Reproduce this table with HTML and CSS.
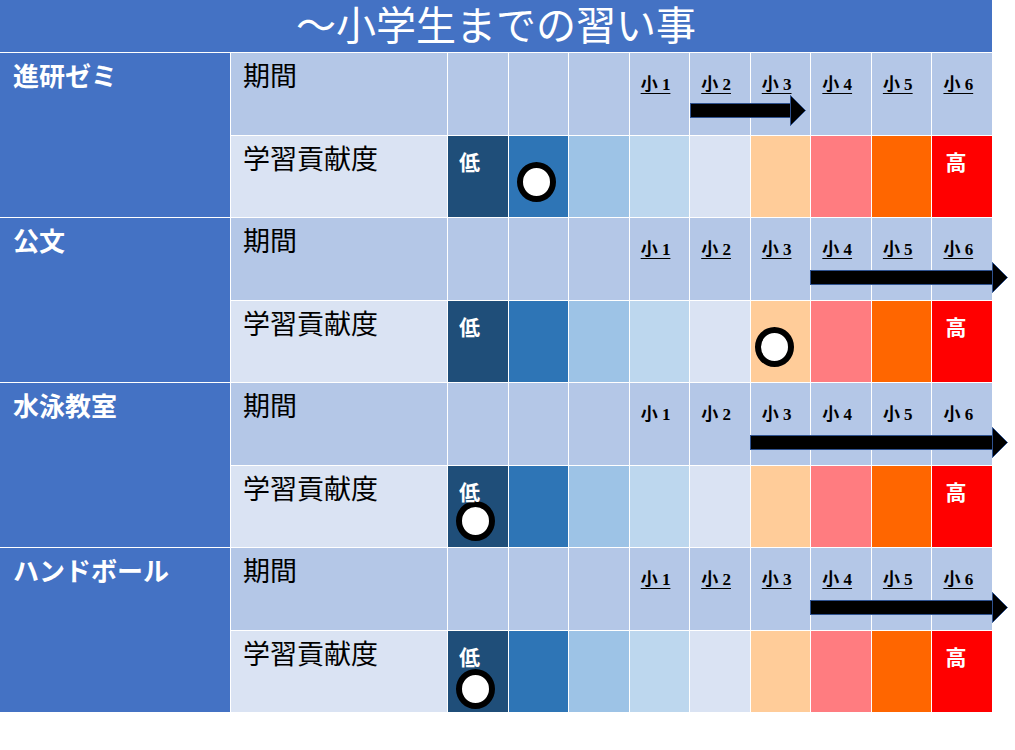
FILE: index.html
```html
<!DOCTYPE html>
<html lang="ja">
<head>
<meta charset="utf-8">
<title>～小学生までの習い事</title>
<link rel="stylesheet" href="styles.css">
</head>
<body>
<div class="sheet">
  <div class="title"><span class="title-text">～小学生までの習い事</span></div>

  <!-- 進研ゼミ -->
  <div class="name">進研ゼミ</div>
  <div class="label period">期間</div>
  <div class="cell p"></div>
  <div class="cell p"></div>
  <div class="cell p"></div>
  <div class="cell p"><span class="grade u">小 1</span></div>
  <div class="cell p"><span class="grade u">小 2</span>
    <div class="arrow arrow-a"><span class="shaft"></span><svg class="head" width="16" height="31" viewBox="0 0 16 31"><polygon points="0.5,0.5 15.5,15.5 0.5,30.5" fill="#000" stroke="#2F528F" stroke-width="1"/></svg></div>
  </div>
  <div class="cell p"><span class="grade u">小 3</span></div>
  <div class="cell p"><span class="grade u">小 4</span></div>
  <div class="cell p"><span class="grade u">小 5</span></div>
  <div class="cell p"><span class="grade u">小 6</span></div>
  <div class="label contrib">学習貢献度</div>
  <div class="cell c1 low"><span class="lv">低</span></div>
  <div class="cell c2 marked"><span class="mark"></span></div>
  <div class="cell c3"></div>
  <div class="cell c4"></div>
  <div class="cell c5"></div>
  <div class="cell c6"></div>
  <div class="cell c7"></div>
  <div class="cell c8"></div>
  <div class="cell c9 high"><span class="lv">高</span></div>

  <!-- 公文 -->
  <div class="name">公文</div>
  <div class="label period">期間</div>
  <div class="cell p"></div>
  <div class="cell p"></div>
  <div class="cell p"></div>
  <div class="cell p"><span class="grade u">小 1</span></div>
  <div class="cell p"><span class="grade u">小 2</span></div>
  <div class="cell p"><span class="grade u">小 3</span></div>
  <div class="cell p"><span class="grade u">小 4</span>
    <div class="arrow arrow-b"><span class="shaft"></span><svg class="head" width="16" height="31" viewBox="0 0 16 31"><polygon points="0.5,0.5 15.5,15.5 0.5,30.5" fill="#000" stroke="#2F528F" stroke-width="1"/></svg></div>
  </div>
  <div class="cell p"><span class="grade u">小 5</span></div>
  <div class="cell p"><span class="grade u">小 6</span></div>
  <div class="label contrib">学習貢献度</div>
  <div class="cell c1 low"><span class="lv">低</span></div>
  <div class="cell c2"></div>
  <div class="cell c3"></div>
  <div class="cell c4"></div>
  <div class="cell c5"></div>
  <div class="cell c6 marked marked-tight"><span class="mark"></span></div>
  <div class="cell c7"></div>
  <div class="cell c8"></div>
  <div class="cell c9 high"><span class="lv">高</span></div>

  <!-- 水泳教室 -->
  <div class="name">水泳教室</div>
  <div class="label period">期間</div>
  <div class="cell p"></div>
  <div class="cell p"></div>
  <div class="cell p"></div>
  <div class="cell p"><span class="grade">小 1</span></div>
  <div class="cell p"><span class="grade">小 2</span></div>
  <div class="cell p"><span class="grade">小 3</span>
    <div class="arrow arrow-c"><span class="shaft"></span><svg class="head" width="16" height="31" viewBox="0 0 16 31"><polygon points="0.5,0.5 15.5,15.5 0.5,30.5" fill="#000" stroke="#2F528F" stroke-width="1"/></svg></div>
  </div>
  <div class="cell p"><span class="grade">小 4</span></div>
  <div class="cell p"><span class="grade">小 5</span></div>
  <div class="cell p"><span class="grade">小 6</span></div>
  <div class="label contrib">学習貢献度</div>
  <div class="cell c1 low"><span class="lv">低</span><span class="mark"></span></div>
  <div class="cell c2"></div>
  <div class="cell c3"></div>
  <div class="cell c4"></div>
  <div class="cell c5"></div>
  <div class="cell c6"></div>
  <div class="cell c7"></div>
  <div class="cell c8"></div>
  <div class="cell c9 high"><span class="lv">高</span></div>

  <!-- ハンドボール -->
  <div class="name">ハンドボール</div>
  <div class="label period">期間</div>
  <div class="cell p"></div>
  <div class="cell p"></div>
  <div class="cell p"></div>
  <div class="cell p"><span class="grade u">小 1</span></div>
  <div class="cell p"><span class="grade u">小 2</span></div>
  <div class="cell p"><span class="grade u">小 3</span></div>
  <div class="cell p"><span class="grade u">小 4</span>
    <div class="arrow arrow-b"><span class="shaft"></span><svg class="head" width="16" height="31" viewBox="0 0 16 31"><polygon points="0.5,0.5 15.5,15.5 0.5,30.5" fill="#000" stroke="#2F528F" stroke-width="1"/></svg></div>
  </div>
  <div class="cell p"><span class="grade u">小 5</span></div>
  <div class="cell p"><span class="grade u">小 6</span></div>
  <div class="label contrib">学習貢献度</div>
  <div class="cell c1 low"><span class="lv">低</span><span class="mark mark-low"></span></div>
  <div class="cell c2"></div>
  <div class="cell c3"></div>
  <div class="cell c4"></div>
  <div class="cell c5"></div>
  <div class="cell c6"></div>
  <div class="cell c7"></div>
  <div class="cell c8"></div>
  <div class="cell c9 high"><span class="lv">高</span></div>
</div>
</body>
</html>
```

FILE: styles.css
```css
html, body {
  margin: 0;
  padding: 0;
  background: #ffffff;
}

body {
  font-family: "Noto Sans CJK JP", sans-serif;
}

.sheet {
  display: grid;
  grid-template-columns: 230px 216px repeat(9, 1fr);
  grid-template-rows: 52px repeat(8, 1fr);
  gap: 1px;
  width: 992px;
  height: 712px;
  background: #ffffff;
}

.title {
  grid-column: 1 / -1;
  background: #4472C4;
  display: flex;
  align-items: center;
  justify-content: center;
}

.title-text {
  color: #ffffff;
  font-size: 40px;
  line-height: 44px;
  font-family: "Liberation Sans", "Noto Sans CJK JP", sans-serif;
}

.name {
  grid-row: span 2;
  background: #4472C4;
  color: #ffffff;
  font-weight: 700;
  font-size: 26px;
  line-height: 1;
  padding: 9px 0 0 13px;
}

.label {
  color: #000000;
  font-size: 27px;
  line-height: 1;
  padding: 8px 0 0 12px;
}

.label.period {
  background: #B4C7E7;
}

.label.contrib {
  background: #DAE3F3;
}

.cell {
  position: relative;
  min-width: 0;
}

.cell.p {
  background: #B4C7E7;
  padding: 18px 0 0 11px;
}

.grade {
  font-family: "Liberation Serif", "Noto Sans CJK JP", serif;
  font-weight: 700;
  font-size: 17px;
  line-height: 20px;
  color: #000000;
}

.grade.u {
  text-decoration: underline;
  text-decoration-thickness: 1px;
  text-underline-offset: 3px;
}

.c1 { background: #1F4E79; }
.c2 { background: #2E75B6; }
.c3 { background: #9DC3E6; }
.c4 { background: #BDD7EE; }
.c5 { background: #DAE3F3; }
.c6 { background: #FFCC99; }
.c7 { background: #FF7C80; }
.c8 { background: #FF6600; }
.c9 { background: #FF0000; }

.low, .high {
  padding: 15px 0 0 11px;
}

.high {
  padding-left: 13px;
}

.lv {
  display: block;
  color: #ffffff;
  font-weight: 700;
  font-size: 21px;
  line-height: 20px;
}

.marked {
  padding: 26px 0 0 8px;
}

.marked-tight {
  padding-left: 4px;
}

.mark {
  display: block;
  box-sizing: border-box;
  width: 39px;
  height: 40px;
  border: 6px solid #000000;
  border-radius: 50%;
  background: #ffffff;
}

.low .mark {
  margin: 0 0 0 -3px;
}

.low .mark-low {
  margin-top: 3px;
}

.arrow {
  position: absolute;
  z-index: 2;
  top: 44px;
  left: -1px;
  height: 31px;
  display: flex;
  align-items: center;
}

.arrow-a {
  top: 42px;
  left: 0;
  width: 116px;
}

.arrow-b {
  width: 198px;
}

.arrow-c {
  width: 258px;
}

.shaft {
  flex: 1;
  height: 15px;
  box-sizing: border-box;
  background: #000000;
  border: 1px solid #2F528F;
  border-right: 0;
}

.head {
  display: block;
  flex: none;
}
```
